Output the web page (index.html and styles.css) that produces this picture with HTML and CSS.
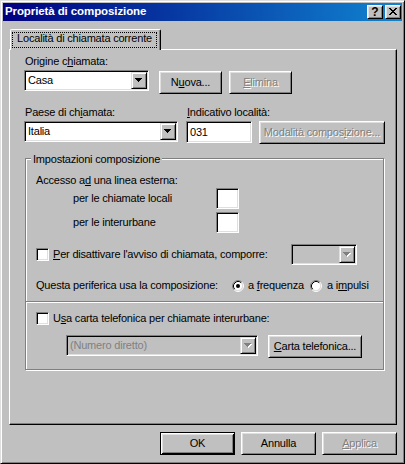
FILE: index.html
```html
<!DOCTYPE html>
<html lang="it">
<head>
<meta charset="utf-8">
<title>Proprietà di composizione</title>
<link rel="stylesheet" href="styles.css">
</head>
<body>
<div class="window">
  <div class="titlebar">
    <span class="title">Proprietà di composizione</span>
    <div class="tb-buttons">
      <span class="tb-btn help">?</span>
      <span class="tb-btn close"><svg width="8" height="7" viewBox="0 0 8 7"><path d="M0 0h2v1H0zM6 0h2v1H6zM1 1h2v1H1zM5 1h2v1H5zM2 2h4v1H2zM3 3h2v1H3zM2 4h4v1H2zM1 5h2v1H1zM5 5h2v1H5zM0 6h2v1H0zM6 6h2v1H6z" fill="#000"/></svg></span>
    </div>
  </div>

  <div class="tabs">
    <div class="tab"><span class="focus">Località di chiamata corrente</span></div>
  </div>

  <div class="panel">
    <div class="label l-origine">Origine c<u>h</u>iamata:</div>
    <div class="row r-origine">
      <div class="combo w-casa">
        <span class="combo-text">Casa</span>
        <span class="combo-btn"><svg width="7" height="4" viewBox="0 0 7 4"><path d="M0 0h7v1H0zM1 1h5v1H1zM2 2h3v1H2zM3 3h1v1H3z" fill="#000"/></svg></span>
      </div>
      <button class="btn b-nuova">N<u>u</u>ova...</button>
      <button class="btn b-elimina disabled"><u>E</u>limina</button>
    </div>

    <div class="row r-paese">
      <div class="col c-paese">
        <div class="label">Paese di ch<u>i</u>amata:</div>
        <div class="combo w-italia">
          <span class="combo-text">Italia</span>
          <span class="combo-btn"><svg width="7" height="4" viewBox="0 0 7 4"><path d="M0 0h7v1H0zM1 1h5v1H1zM2 2h3v1H2zM3 3h1v1H3z" fill="#000"/></svg></span>
        </div>
      </div>
      <div class="col c-ind">
        <div class="label"><u>I</u>ndicativo località:</div>
        <div class="field w-ind">031</div>
      </div>
      <button class="btn b-modalita disabled">Modalità compos<u>i</u>zione...</button>
    </div>

    <div class="group">
      <div class="legend">Impostazioni composizione</div>
      <div class="t-accesso">Accesso a<u>d</u> una linea esterna:</div>
      <div class="prefix-row pr-1">
        <span class="prefix-label">per le chiamate locali</span>
        <span class="field w-prefix"></span>
      </div>
      <div class="prefix-row pr-2">
        <span class="prefix-label">per le interurbane</span>
        <span class="field w-prefix"></span>
      </div>
      <div class="check-row cr-avviso">
        <span class="checkbox"></span>
        <span class="check-label w-avviso"><u>P</u>er disattivare l'avviso di chiamata, comporre:</span>
        <div class="combo disabled w-avviso-combo">
          <span class="combo-text"></span>
          <span class="combo-btn"><svg width="8" height="5" viewBox="0 0 8 5"><path d="M1 1h7v1H1zM2 2h5v1H2zM3 3h3v1H3zM4 4h1v1H4z" fill="#fff"/><path d="M0 0h7v1H0zM1 1h5v1H1zM2 2h3v1H2zM3 3h1v1H3z" fill="#808080"/></svg></span>
        </div>
      </div>
      <div class="radio-row">
        <span class="radio-caption">Questa periferica usa la composizione:</span>
        <span class="radio"><svg width="12" height="12" viewBox="0 0 12 12"><circle cx="6" cy="6" r="4.5" fill="#fff"/><path d="M2.11 9.89A5.5 5.5 0 0 1 9.89 2.11" fill="none" stroke="#808080"/><path d="M9.89 2.11A5.5 5.5 0 0 1 2.11 9.89" fill="none" stroke="#fff"/><path d="M2.82 9.18A4.5 4.5 0 0 1 9.18 2.82" fill="none" stroke="#000"/><path d="M9.18 2.82A4.5 4.5 0 0 1 2.82 9.18" fill="none" stroke="#dfdfdf"/><circle cx="6" cy="6" r="2" fill="#000"/></svg></span>
        <span class="radio-label w-freq">a <u>f</u>requenza</span>
        <span class="radio"><svg width="12" height="12" viewBox="0 0 12 12"><circle cx="6" cy="6" r="4.5" fill="#fff"/><path d="M2.11 9.89A5.5 5.5 0 0 1 9.89 2.11" fill="none" stroke="#808080"/><path d="M9.89 2.11A5.5 5.5 0 0 1 2.11 9.89" fill="none" stroke="#fff"/><path d="M2.82 9.18A4.5 4.5 0 0 1 9.18 2.82" fill="none" stroke="#000"/><path d="M9.18 2.82A4.5 4.5 0 0 1 2.82 9.18" fill="none" stroke="#dfdfdf"/></svg></span>
        <span class="radio-label r2">a i<u>m</u>pulsi</span>
      </div>
      <div class="separator"></div>
      <div class="check-row cr-carta">
        <span class="checkbox"></span>
        <span class="check-label">U<u>s</u>a carta telefonica per chiamate interurbane:</span>
      </div>
      <div class="row r-carta">
        <div class="combo disabled w-numero">
          <span class="combo-text">(Numero diretto)</span>
          <span class="combo-btn"><svg width="8" height="5" viewBox="0 0 8 5"><path d="M1 1h7v1H1zM2 2h5v1H2zM3 3h3v1H3zM4 4h1v1H4z" fill="#fff"/><path d="M0 0h7v1H0zM1 1h5v1H1zM2 2h3v1H2zM3 3h1v1H3z" fill="#808080"/></svg></span>
        </div>
        <button class="btn b-carta"><u>C</u>arta telefonica...</button>
      </div>
    </div>
  </div>

  <div class="footer">
    <button class="btn b-foot default">OK</button>
    <button class="btn b-foot">Annulla</button>
    <button class="btn b-foot disabled"><u>A</u>pplica</button>
  </div>
</div>
</body>
</html>
```

FILE: styles.css
```css
* { box-sizing: border-box; }

html, body {
  margin: 0;
  padding: 0;
  background: #c0c0c0;
}

body {
  font-family: "Liberation Sans", Arial, sans-serif;
  font-size: 11px;
  line-height: 13px;
  letter-spacing: -0.2px;
  color: #000;
}

u { text-decoration: underline; text-underline-offset: 1px; }

.window {
  width: 405px;
  height: 464px;
  border: 1px solid;
  border-color: #dfdfdf #000 #000 #dfdfdf;
  box-shadow: inset 1px 1px 0 #fff, inset -1px -1px 0 #808080;
  padding: 2px;
  background: #c0c0c0;
  display: flex;
  flex-direction: column;
  overflow: hidden;
}

/* title bar */
.titlebar {
  height: 18px;
  flex-shrink: 0;
  background: linear-gradient(to right, #000080, #1084d0);
  display: flex;
  align-items: flex-start;
  justify-content: space-between;
  padding: 0 1px 0 2px;
}

.title {
  color: #fff;
  font-weight: bold;
  font-size: 11.5px;
  line-height: 14px;
  letter-spacing: -0.1px;
  margin-top: 1px;
  white-space: nowrap;
}

.tb-buttons {
  display: flex;
  gap: 2px;
  margin-top: 2px;
}

.tb-btn {
  width: 16px;
  height: 14px;
  background: #c0c0c0;
  border: 1px solid;
  border-color: #fff #000 #000 #fff;
  box-shadow: inset 1px 1px 0 #dfdfdf, inset -1px -1px 0 #808080;
  display: block;
}

.tb-btn.help {
  font-weight: bold;
  font-size: 12px;
  line-height: 12px;
  text-align: center;
  letter-spacing: 0;
}

.tb-btn.close svg {
  display: block;
  margin: 2px 0 0 3px;
}

/* tabs */
.tabs {
  margin-top: 8px;
  margin-left: 7px;
  display: flex;
  flex-shrink: 0;
}

.tab {
  position: relative;
  z-index: 1;
  width: 151px;
  height: 21px;
  margin-bottom: -1px;
  background: #c0c0c0;
  border-left: 1px solid #fff;
  border-top: 1px solid #fff;
  border-right: 1px solid #000;
  border-radius: 2px 2px 0 0;
  box-shadow: inset -1px 0 0 #808080;
}

.focus {
  display: block;
  width: 145px;
  height: 16px;
  margin: 2px 0 0 1px;
  border: 1px dotted #000;
  text-align: center;
  line-height: 11px;
  white-space: nowrap;
}

/* panel */
.panel {
  margin-left: 6px;
  width: 388px;
  height: 376px;
  flex-shrink: 0;
  border: 1px solid;
  border-color: #fff #000 #000 #fff;
  box-shadow: inset -1px -1px 0 #808080;
  padding-left: 14px;
  display: flex;
  flex-direction: column;
  align-items: flex-start;
}

.label {
  margin-left: 1px;
  white-space: nowrap;
}

.l-origine { margin-top: 5px; }

.row {
  display: flex;
  align-items: flex-start;
}

.r-origine { margin-top: 2px; }
.r-paese { margin-top: 12px; }

.col {
  display: flex;
  flex-direction: column;
  flex-shrink: 0;
}

.c-paese { width: 154px; }
.c-paese .combo { margin-top: 2px; }
.c-ind { width: 66px; margin-left: 8px; }
.c-ind .field { margin-top: 2px; }

/* combo box */
.combo {
  display: flex;
  flex-shrink: 0;
  height: 21px;
  background: #fff;
  border: 1px solid;
  border-color: #808080 #fff #fff #808080;
  box-shadow: inset 1px 1px 0 #000, inset -1px -1px 0 #dfdfdf;
  padding: 1px;
}

.combo.disabled { background: #c0c0c0; color: #808080; }

.combo-text {
  flex: 1;
  padding-left: 2px;
  line-height: 17px;
  white-space: nowrap;
  overflow: hidden;
}

.combo-btn {
  width: 16px;
  height: 17px;
  flex-shrink: 0;
  background: #c0c0c0;
  border: 1px solid;
  border-color: #dfdfdf #000 #000 #dfdfdf;
  box-shadow: inset 1px 1px 0 #fff, inset -1px -1px 0 #808080;
}

.combo-btn svg {
  display: block;
  margin: 5px 0 0 3px;
}

.w-casa { width: 125px; }
.w-italia { width: 154px; }
.w-avviso-combo { width: 66px; }
.w-numero { width: 192px; }

/* edit field */
.field {
  display: block;
  flex-shrink: 0;
  background: #fff;
  border: 1px solid;
  border-color: #808080 #fff #fff #808080;
  box-shadow: inset 1px 1px 0 #000, inset -1px -1px 0 #dfdfdf;
  padding: 1px 1px 1px 3px;
}

.w-ind { width: 66px; height: 22px; line-height: 18px; }
.w-prefix { width: 23px; height: 21px; }

/* buttons */
.btn {
  font: inherit;
  letter-spacing: inherit;
  color: #000;
  background: #c0c0c0;
  margin: 0;
  padding: 0;
  height: 23px;
  flex-shrink: 0;
  border: 1px solid;
  border-color: #fff #000 #000 #fff;
  box-shadow: inset 1px 1px 0 #dfdfdf, inset -1px -1px 0 #808080;
  display: flex;
  align-items: center;
  justify-content: center;
  line-height: 13px;
  white-space: nowrap;
}

.btn.disabled {
  color: #808080;
  text-shadow: 1px 1px 0 #fff;
}

.btn.default {
  border-color: #000;
  box-shadow: inset 1px 1px 0 #fff, inset -1px -1px 0 #000, inset 2px 2px 0 #dfdfdf, inset -2px -2px 0 #808080;
}

.b-nuova { width: 63px; margin-left: 10px; margin-top: 1px; }
.b-elimina { width: 63px; margin-left: 7px; margin-top: 1px; }
.b-modalita { width: 126px; margin-left: 7px; margin-top: 15px; }
.b-carta { width: 94px; margin-left: 10px; }
.b-foot { width: 75px; }

/* group box */
.group {
  margin-top: 14px;
  margin-left: 1px;
  width: 359px;
  height: 212px;
  flex-shrink: 0;
  border: 1px solid #808080;
  box-shadow: inset 1px 1px 0 #fff, 1px 1px 0 #fff;
  padding-left: 10px;
  display: flex;
  flex-direction: column;
  align-items: flex-start;
}

.legend {
  margin-top: -6px;
  margin-left: -5px;
  padding: 0 2px;
  background: #c0c0c0;
  white-space: nowrap;
}

.t-accesso { margin-top: 8px; white-space: nowrap; }

.prefix-row {
  display: flex;
  align-items: center;
  height: 21px;
  padding-left: 37px;
}

.pr-1 { margin-top: 1px; }
.pr-2 { margin-top: 3px; }

.prefix-label {
  width: 143px;
  flex-shrink: 0;
  white-space: nowrap;
}

.check-row {
  display: flex;
  align-items: center;
}

.cr-avviso { margin-top: 11px; height: 21px; }
.cr-carta { margin-top: 9px; height: 13px; }

.checkbox {
  display: block;
  width: 13px;
  height: 13px;
  flex-shrink: 0;
  background: #fff;
  border: 1px solid;
  border-color: #808080 #fff #fff #808080;
  box-shadow: inset 1px 1px 0 #000, inset -1px -1px 0 #dfdfdf;
}

.check-label {
  margin-left: 4px;
  white-space: nowrap;
}

.w-avviso { width: 238px; flex-shrink: 0; }

.radio-row {
  margin-top: 14px;
  height: 13px;
  display: flex;
  align-items: center;
}

.radio-caption {
  width: 196px;
  flex-shrink: 0;
  white-space: nowrap;
}

.radio svg { display: block; }

.radio-label { margin-left: 4px; white-space: nowrap; }
.w-freq { width: 62px; flex-shrink: 0; }
.radio-label.r2 { margin-left: 5px; }

.separator {
  margin-top: 9px;
  margin-left: -10px;
  width: 357px;
  height: 2px;
  border-top: 1px solid #808080;
  border-bottom: 1px solid #fff;
}

.r-carta {
  margin-top: 10px;
  padding-left: 30px;
}

/* footer */
.footer {
  margin-top: 7px;
  margin-left: 6px;
  width: 388px;
  display: flex;
  justify-content: flex-end;
  gap: 6px;
}
```
